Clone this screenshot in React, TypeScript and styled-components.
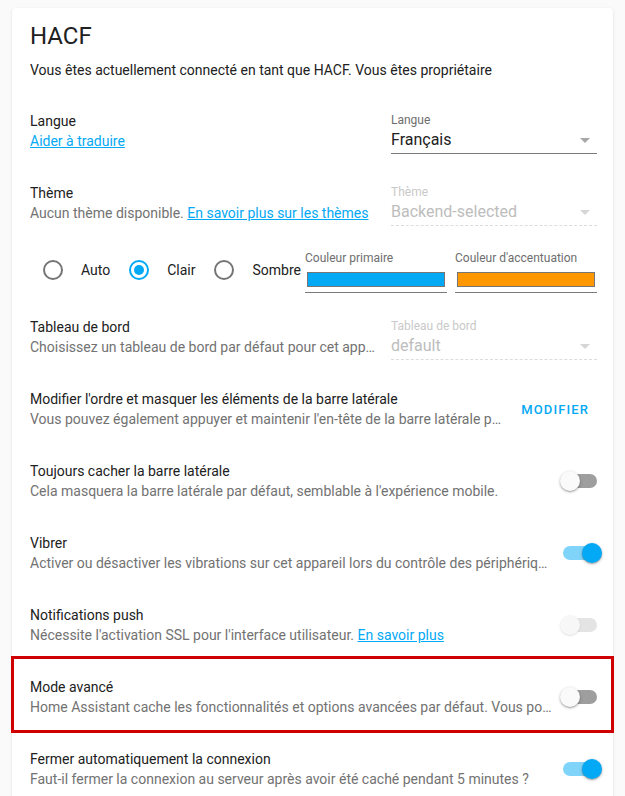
import React from 'react';
import styled, { createGlobalStyle, css } from 'styled-components';

const GlobalStyle = createGlobalStyle`
  body {
    margin: 0;
    background: #fafafa;
    font-family: Roboto, 'Noto Sans', sans-serif;
    -webkit-font-smoothing: antialiased;
  }
`;

const Page = styled.main`
  padding: 8px 12px 0;
`;

const Card = styled.section`
  background: #fff;
  border-radius: 4px;
  box-shadow: 0 1px 2px rgba(0, 0, 0, 0.08), 0 1px 4px rgba(0, 0, 0, 0.06);
  padding: 12px 16px 0 18px;
`;

const Heading = styled.h1`
  margin: 0;
  font-size: 24px;
  line-height: 32px;
  font-weight: 400;
  color: #212121;
`;

const Intro = styled.p`
  margin: 8px 0 15px;
  font-size: 14px;
  line-height: 20px;
  color: #212121;
`;

const Row = styled.div<{ $highlight?: boolean }>`
  position: relative;
  display: flex;
  align-items: center;
  height: 72px;

  ${(p) =>
    p.$highlight &&
    css`
      &::after {
        content: '';
        position: absolute;
        top: -5px;
        bottom: 0;
        left: -19px;
        right: -17px;
        border: 3px solid #d10000;
        pointer-events: none;
      }
    `}
`;

const Body = styled.div<{ $gap?: number }>`
  flex: 1;
  min-width: 0;
  padding-right: ${(p) => p.$gap ?? 10}px;
`;

const Title = styled.div`
  font-size: 14px;
  line-height: 20px;
  color: #212121;
  white-space: nowrap;
  overflow: hidden;
  text-overflow: ellipsis;
`;

const Desc = styled(Title)`
  color: #727272;
`;

const Link = styled.a`
  color: #03a9f4;
  text-decoration: underline;
  cursor: pointer;
`;

const Select = styled.div<{ $disabled?: boolean }>`
  width: 206px;
  flex-shrink: 0;
  padding-top: 4px;
  color: ${(p) => (p.$disabled ? '#bdbdbd' : '#212121')};
`;

const SelectLabel = styled.div<{ $disabled?: boolean }>`
  font-size: 12px;
  line-height: 16px;
  color: ${(p) => (p.$disabled ? '#c9c9c9' : '#6e6e6e')};
`;

const SelectValue = styled.div<{ $disabled?: boolean }>`
  display: flex;
  align-items: center;
  justify-content: space-between;
  font-size: 16px;
  line-height: 24px;
  padding-bottom: 1px;
  border-bottom: 1px ${(p) => (p.$disabled ? 'dashed #dcdcdc' : 'solid #7a7a7a')};
`;

const Arrow = styled.span<{ $disabled?: boolean }>`
  width: 0;
  height: 0;
  margin-right: 7px;
  border-left: 5px solid transparent;
  border-right: 5px solid transparent;
  border-top: 5px solid ${(p) => (p.$disabled ? '#d6d6d6' : '#a8a8a8')};
`;

const ThemeRow = styled.div`
  display: flex;
  align-items: center;
  height: 62px;
`;

const RadioGroup = styled.div`
  flex: 1;
  display: flex;
  align-items: center;
  gap: 9px;
  margin-left: 3px;
`;

const RadioItem = styled.label`
  display: flex;
  align-items: center;
  gap: 8px;
  font-size: 14px;
  line-height: 20px;
  color: #212121;
`;

const RadioCircle = styled.span<{ $checked?: boolean }>`
  box-sizing: border-box;
  width: 20px;
  height: 20px;
  margin: 10px;
  border-radius: 50%;
  border: 2px solid ${(p) => (p.$checked ? '#03a9f4' : '#757575')};
  display: flex;
  align-items: center;
  justify-content: center;

  &::after {
    content: '';
    width: 10px;
    height: 10px;
    border-radius: 50%;
    background: ${(p) => (p.$checked ? '#03a9f4' : 'transparent')};
  }
`;

const ColorFields = styled.div`
  flex: 0 0 292px;
  display: flex;
  gap: 8px;
  padding-top: 2px;
`;

const ColorField = styled.div`
  flex: 1;
`;

const ColorLabel = styled.div`
  font-size: 12px;
  line-height: 16px;
  color: #6e6e6e;
`;

const SwatchWell = styled.div`
  padding: 6px 2px 5px;
  border-bottom: 1px solid #7a7a7a;
`;

const Swatch = styled.div<{ $color: string }>`
  box-sizing: border-box;
  height: 15px;
  border: 1px solid #767676;
  background: ${(p) => p.$color};
`;

const Switch = styled.span<{ $on?: boolean; $disabled?: boolean }>`
  position: relative;
  width: 37px;
  height: 20px;
  flex-shrink: 0;

  &::before {
    content: '';
    position: absolute;
    left: 3px;
    top: 3px;
    width: 34px;
    height: 14px;
    border-radius: 7px;
    background: ${(p) =>
      p.$disabled ? '#e4e4e4' : p.$on ? 'rgba(3, 169, 244, 0.5)' : '#9e9e9e'};
  }

  &::after {
    content: '';
    position: absolute;
    top: 0;
    left: ${(p) => (p.$on ? '22px' : '0')};
    width: 20px;
    height: 20px;
    border-radius: 50%;
    background: ${(p) => (p.$disabled ? '#f7f7f7' : p.$on ? '#03a9f4' : '#fafafa')};
    box-shadow: ${(p) =>
      p.$disabled
        ? '0 1px 2px rgba(0, 0, 0, 0.12)'
        : '0 1px 3px rgba(0, 0, 0, 0.3), 0 1px 1px rgba(0, 0, 0, 0.14)'};
  }
`;

const TextButton = styled.button`
  flex-shrink: 0;
  height: 36px;
  padding: 0 8px;
  border: 0;
  background: none;
  font-family: inherit;
  font-size: 13px;
  font-weight: 500;
  letter-spacing: 1.1px;
  text-transform: uppercase;
  color: #03a9f4;
  cursor: pointer;
`;

type ToggleRowProps = {
  title: string;
  desc: React.ReactNode;
  on?: boolean;
  disabled?: boolean;
  highlight?: boolean;
};

function ToggleRow({ title, desc, on, disabled, highlight }: ToggleRowProps) {
  return (
    <Row $highlight={highlight}>
      <Body $gap={8}>
        <Title>{title}</Title>
        <Desc>{desc}</Desc>
      </Body>
      <Switch $on={on} $disabled={disabled} />
    </Row>
  );
}

type SelectRowProps = {
  title: string;
  desc: React.ReactNode;
  label: string;
  value: string;
  disabled?: boolean;
};

function SelectRow({ title, desc, label, value, disabled }: SelectRowProps) {
  return (
    <Row>
      <Body>
        <Title>{title}</Title>
        <Desc>{desc}</Desc>
      </Body>
      <Select $disabled={disabled}>
        <SelectLabel $disabled={disabled}>{label}</SelectLabel>
        <SelectValue $disabled={disabled}>
          {value}
          <Arrow $disabled={disabled} />
        </SelectValue>
      </Select>
    </Row>
  );
}

const themes = [
  { label: 'Auto', checked: false },
  { label: 'Clair', checked: true },
  { label: 'Sombre', checked: false },
];

export default function App() {
  return (
    <>
      <GlobalStyle />
      <Page>
        <Card>
          <Heading>HACF</Heading>
          <Intro>Vous êtes actuellement connecté en tant que HACF. Vous êtes propriétaire</Intro>

          <SelectRow
            title="Langue"
            desc={<Link>Aider à traduire</Link>}
            label="Langue"
            value="Français"
          />
          <SelectRow
            title="Thème"
            desc={
              <>
                Aucun thème disponible. <Link>En savoir plus sur les thèmes</Link>
              </>
            }
            label="Thème"
            value="Backend-selected"
            disabled
          />

          <ThemeRow>
            <RadioGroup>
              {themes.map((t) => (
                <RadioItem key={t.label}>
                  <RadioCircle $checked={t.checked} />
                  {t.label}
                </RadioItem>
              ))}
            </RadioGroup>
            <ColorFields>
              <ColorField>
                <ColorLabel>Couleur primaire</ColorLabel>
                <SwatchWell>
                  <Swatch $color="#03a9f4" />
                </SwatchWell>
              </ColorField>
              <ColorField>
                <ColorLabel>Couleur d'accentuation</ColorLabel>
                <SwatchWell>
                  <Swatch $color="#ff9800" />
                </SwatchWell>
              </ColorField>
            </ColorFields>
          </ThemeRow>

          <SelectRow
            title="Tableau de bord"
            desc="Choisissez un tableau de bord par défaut pour cet appareil."
            label="Tableau de bord"
            value="default"
            disabled
          />

          <Row>
            <Body>
              <Title>Modifier l'ordre et masquer les éléments de la barre latérale</Title>
              <Desc>
                Vous pouvez également appuyer et maintenir l'en-tête de la barre latérale pour activer le mode d'édition.
              </Desc>
            </Body>
            <TextButton>Modifier</TextButton>
          </Row>

          <ToggleRow
            title="Toujours cacher la barre latérale"
            desc="Cela masquera la barre latérale par défaut, semblable à l'expérience mobile."
          />
          <ToggleRow
            title="Vibrer"
            desc="Activer ou désactiver les vibrations sur cet appareil lors du contrôle des périphériques."
            on
          />
          <ToggleRow
            title="Notifications push"
            desc={
              <>
                Nécessite l'activation SSL pour l'interface utilisateur. <Link>En savoir plus</Link>
              </>
            }
            disabled
          />
          <ToggleRow
            title="Mode avancé"
            desc="Home Assistant cache les fonctionnalités et options avancées par défaut. Vous pouvez les rendre accessibles en activant ce mode."
            highlight
          />
          <ToggleRow
            title="Fermer automatiquement la connexion"
            desc="Faut-il fermer la connexion au serveur après avoir été caché pendant 5 minutes ?"
            on
          />
        </Card>
      </Page>
    </>
  );
}
